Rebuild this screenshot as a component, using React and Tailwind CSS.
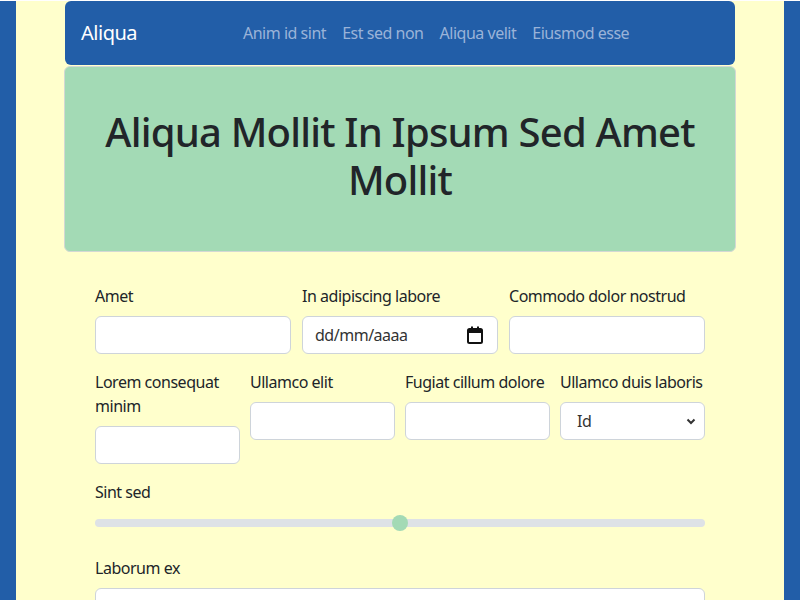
import React from "react";

function Label({ children }) {
  return <label className="block mb-2 text-[16px] leading-6 text-[#212529]">{children}</label>;
}

function Input() {
  return <div className="h-[38px] bg-white border border-[#ced4da] rounded-[6px]" />;
}

export default function App() {
  return (
    <div className="min-h-screen bg-[#225ea8] px-4 tracking-[-0.03em]" style={{ fontFamily: '"Noto Sans", sans-serif' }}>
      <div className="bg-[#ffffcc] min-h-[600px] px-12 pb-8">
        <nav className="mx-px mt-px h-16 bg-[#225ea8] rounded-[6px] flex items-center px-4">
          <span className="text-white text-[20px] mr-4">Aliqua</span>
          <div className="flex-1 flex justify-center text-[16px] text-[#9ab3d8]">
            <span className="px-2">Anim id sint</span>
            <span className="px-2">Est sed non</span>
            <span className="px-2">Aliqua velit</span>
            <span className="px-2">Eiusmod esse</span>
          </div>
        </nav>
        <div className="mt-px bg-[#a3dab5] border border-[#d3d8d4] rounded-[6px] pt-[41px] pb-[47px] px-4">
          <h1 className="text-center text-[40px] leading-[48px] font-medium tracking-[-0.02em] text-[#212529]">
            Aliqua Mollit In Ipsum Sed Amet Mollit
          </h1>
        </div>
        <form className="px-[31px] pt-8">
          <div className="grid grid-cols-3 gap-x-[11px] mb-4">
            <div>
              <Label>Amet</Label>
              <Input />
            </div>
            <div>
              <Label>In adipiscing labore</Label>
              <div className="h-[38px] bg-white border border-[#ced4da] rounded-[6px] flex items-center pl-3 pr-[14px] justify-between text-[16px] text-[#333]">
                <span>dd/mm/aaaa</span>
                <svg width="16" height="18" viewBox="0 0 16 18">
                  <rect x="1" y="3" width="14" height="14" rx="1.5" fill="none" stroke="#111" strokeWidth="2" />
                  <rect x="1" y="3" width="14" height="4" fill="#111" />
                  <rect x="4" y="0.5" width="2" height="4" fill="#111" />
                  <rect x="10" y="0.5" width="2" height="4" fill="#111" />
                </svg>
              </div>
            </div>
            <div>
              <Label>Commodo dolor nostrud</Label>
              <Input />
            </div>
          </div>
          <div className="grid grid-cols-4 gap-x-[10px] mb-4 items-start">
            <div>
              <Label>Lorem consequat minim</Label>
              <Input />
            </div>
            <div>
              <Label>Ullamco elit</Label>
              <Input />
            </div>
            <div>
              <Label>Fugiat cillum dolore</Label>
              <Input />
            </div>
            <div>
              <Label>Ullamco duis laboris</Label>
              <div className="h-[38px] bg-white border border-[#ced4da] rounded-[6px] flex items-center pl-4 pr-[8px] justify-between text-[16px] text-[#333]">
                <span>Id</span>
                <svg width="10" height="8" viewBox="0 0 10 8">
                  <path d="M1.5 2.5 L5 6 L8.5 2.5" fill="none" stroke="#333" strokeWidth="2" />
                </svg>
              </div>
            </div>
          </div>
          <div>
            <Label>Sint sed</Label>
            <div className="relative h-[22px] flex items-center mb-[22px]">
              <div className="w-full h-2 rounded-full bg-[#dee2e6]" />
              <div className="absolute left-1/2 -translate-x-1/2 w-4 h-4 rounded-full bg-[#a3dab5]" />
            </div>
          </div>
          <div>
            <Label>Laborum ex</Label>
            <Input />
          </div>
        </form>
      </div>
    </div>
  );
}
